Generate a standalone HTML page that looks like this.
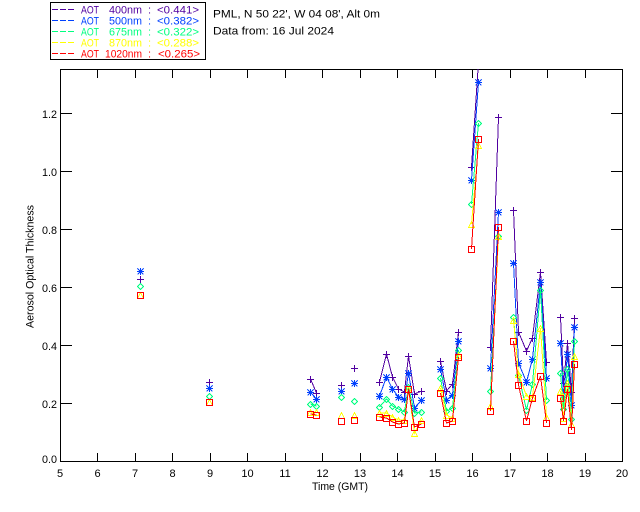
<!DOCTYPE html>
<html><head><meta charset="utf-8"><title>AOT</title>
<style>
html,body{margin:0;padding:0;background:#fff}
svg{display:block}
svg *{shape-rendering:crispEdges}
text{font-family:"Liberation Sans",sans-serif;font-size:11px;fill:#000;shape-rendering:auto}
polyline{fill:none;stroke-width:1}
.a{stroke:#5000a0;marker:url(#ma)}
.b{stroke:#0040ff;marker:url(#mb)}
.c{stroke:#00ff80;marker:url(#mc)}
.d{stroke:#ffff00;marker:url(#md)}
.e{stroke:#ff0000;marker:url(#me)}
</style></head><body>
<svg width="640" height="512" viewBox="0 0 640 512" xmlns="http://www.w3.org/2000/svg">
<defs>
<clipPath id="clip"><rect x="60" y="69" width="563" height="393"/></clipPath>
<marker id="ma" markerUnits="userSpaceOnUse" markerWidth="12" markerHeight="12" refX="6" refY="5.500" overflow="visible"><path d="M2.500 6H9.500M6 2.500V9.500" stroke="#5000a0" fill="none"/></marker>
<marker id="mb" markerUnits="userSpaceOnUse" markerWidth="12" markerHeight="12" refX="6" refY="5.500" overflow="visible"><path d="M2.500 6H9.500M6 2.500V9.500M3 3L9 9M9 3L3 9" stroke="#0040ff" fill="none"/><rect x="4.500" y="4.500" width="3" height="3" fill="#0040ff"/></marker>
<marker id="mc" markerUnits="userSpaceOnUse" markerWidth="12" markerHeight="12" refX="6" refY="5.500" overflow="visible"><path d="M6 3L9 6L6 9L3 6Z" stroke="#00ff80" fill="none"/></marker>
<marker id="md" markerUnits="userSpaceOnUse" markerWidth="12" markerHeight="12" refX="6" refY="5.500" overflow="visible"><path d="M6 3L9 9H3Z" stroke="#ffff00" fill="none"/></marker>
<marker id="me" markerUnits="userSpaceOnUse" markerWidth="12" markerHeight="12" refX="6" refY="5.500" overflow="visible"><path d="M3 3H9V9H3Z" stroke="#ff0000" fill="none"/></marker>
</defs>

<!-- legend -->
<rect x="50.500" y="2.500" width="155" height="57" fill="none" stroke="#000"/>
<g stroke-dasharray="6 2" stroke-width="1" fill="none">
<path d="M52 9.500H75" stroke="#5000a0"/>
<path d="M52 20.500H75" stroke="#0040ff"/>
<path d="M52 31.500H75" stroke="#00ff80"/>
<path d="M52 42.500H75" stroke="#ffff00"/>
<path d="M52 53.500H75" stroke="#ff0000"/>
</g>
<g><text x="81" y="13.500" textLength="18" lengthAdjust="spacingAndGlyphs" style="fill:#5000a0">AOT</text><text x="109" y="13.500" textLength="33" lengthAdjust="spacingAndGlyphs" style="fill:#5000a0">400nm</text><text x="148" y="13.500" style="fill:#5000a0">:</text><text x="157" y="13.500" textLength="42" lengthAdjust="spacingAndGlyphs" style="fill:#5000a0">&lt;0.441&gt;</text></g>
<g><text x="81" y="24.500" textLength="18" lengthAdjust="spacingAndGlyphs" style="fill:#0040ff">AOT</text><text x="109" y="24.500" textLength="33" lengthAdjust="spacingAndGlyphs" style="fill:#0040ff">500nm</text><text x="148" y="24.500" style="fill:#0040ff">:</text><text x="157" y="24.500" textLength="42" lengthAdjust="spacingAndGlyphs" style="fill:#0040ff">&lt;0.382&gt;</text></g>
<g><text x="81" y="35.500" textLength="18" lengthAdjust="spacingAndGlyphs" style="fill:#00ff80">AOT</text><text x="109" y="35.500" textLength="33" lengthAdjust="spacingAndGlyphs" style="fill:#00ff80">675nm</text><text x="148" y="35.500" style="fill:#00ff80">:</text><text x="157" y="35.500" textLength="42" lengthAdjust="spacingAndGlyphs" style="fill:#00ff80">&lt;0.322&gt;</text></g>
<g><text x="81" y="46.500" textLength="18" lengthAdjust="spacingAndGlyphs" style="fill:#ffff00">AOT</text><text x="109" y="46.500" textLength="33" lengthAdjust="spacingAndGlyphs" style="fill:#ffff00">870nm</text><text x="148" y="46.500" style="fill:#ffff00">:</text><text x="157" y="46.500" textLength="42" lengthAdjust="spacingAndGlyphs" style="fill:#ffff00">&lt;0.288&gt;</text></g>
<g><text x="81" y="57.500" textLength="18" lengthAdjust="spacingAndGlyphs" style="fill:#ff0000">AOT</text><text x="105" y="57.500" textLength="37" lengthAdjust="spacingAndGlyphs" style="fill:#ff0000">1020nm</text><text x="148" y="57.500" style="fill:#ff0000">:</text><text x="158" y="57.500" textLength="42" lengthAdjust="spacingAndGlyphs" style="fill:#ff0000">&lt;0.265&gt;</text></g>

<text x="213" y="17.500" textLength="167" lengthAdjust="spacingAndGlyphs">PML, N 50 22', W 04 08', Alt 0m</text>
<text x="213" y="34.500" textLength="121" lengthAdjust="spacingAndGlyphs">Data from: 16 Jul 2024</text>

<!-- axes -->
<path d="M60.500 69.500H622.500V461.500H60.500Z" fill="none" stroke="#000"/>
<path stroke="#000" fill="none" d="M97.500 69V78M135.500 69V78M172.500 69V78M210.500 69V78M247.500 69V78M285.500 69V78M322.500 69V78M360.500 69V78M397.500 69V78M435.500 69V78M472.500 69V78M510.500 69V78M547.500 69V78M585.500 69V78
M97.500 453V461M135.500 453V461M172.500 453V461M210.500 453V461M247.500 453V461M285.500 453V461M322.500 453V461M360.500 453V461M397.500 453V461M435.500 453V461M472.500 453V461M510.500 453V461M547.500 453V461M585.500 453V461
M60 113.500H72M60 171.500H72M60 229.500H72M60 287.500H72M60 345.500H72M60 403.500H72
M611 113.500H622M611 171.500H622M611 229.500H622M611 287.500H622M611 345.500H622M611 403.500H622"/>

<g>
<text x="42" y="118" textLength="15" lengthAdjust="spacingAndGlyphs">1.2</text>
<text x="42" y="176" textLength="15" lengthAdjust="spacingAndGlyphs">1.0</text>
<text x="42" y="234" textLength="15" lengthAdjust="spacingAndGlyphs">0.8</text>
<text x="42" y="292" textLength="15" lengthAdjust="spacingAndGlyphs">0.6</text>
<text x="42" y="350" textLength="15" lengthAdjust="spacingAndGlyphs">0.4</text>
<text x="42" y="408" textLength="15" lengthAdjust="spacingAndGlyphs">0.2</text>
<text x="42" y="463" textLength="15" lengthAdjust="spacingAndGlyphs">0.0</text>
</g>
<g text-anchor="middle">
<text x="60" y="477">5</text><text x="97.500" y="477">6</text><text x="135" y="477">7</text><text x="172.500" y="477">8</text><text x="210" y="477">9</text>
<text x="247.500" y="477">10</text><text x="285" y="477">11</text><text x="322.500" y="477">12</text><text x="360" y="477">13</text><text x="397.500" y="477">14</text>
<text x="435" y="477">15</text><text x="472.500" y="477">16</text><text x="510" y="477">17</text><text x="547.500" y="477">18</text><text x="585" y="477">19</text><text x="622" y="477">20</text>
</g>
<text x="312" y="490" textLength="56" lengthAdjust="spacingAndGlyphs">Time (GMT)</text>
<text transform="translate(33.500 328) rotate(-90)" textLength="123" lengthAdjust="spacingAndGlyphs">Aerosol Optical Thickness</text>

<!-- data -->
<g clip-path="url(#clip)">
<g>
<polyline class="a" points="140.500,279 140.500,279"/>
<polyline class="a" points="209.500,382 209.500,382"/>
<polyline class="a" points="310.500,379 316.500,393"/>
<polyline class="a" points="341.500,385 341.500,385"/>
<polyline class="a" points="354.500,368 354.500,368"/>
<polyline class="a" points="379.500,382 386.500,354 392.500,377 398.500,389 404.500,392 408.500,356 414.500,394 421.500,391"/>
<polyline class="a" points="440.500,361 446.500,391 452.500,384 458.500,332"/>
<polyline class="a" points="471.500,167 478.500,62"/>
<polyline class="a" points="490.500,347 498.500,117"/>
<polyline class="a" points="513.500,210 518.500,332 526.500,351 532.500,338 540.500,272 546.500,362"/>
<polyline class="a" points="560.500,317 563.500,383 567.500,343 571.500,392 574.500,318"/>
</g>
<g>
<polyline class="b" points="140.500,271 140.500,271"/>
<polyline class="b" points="209.500,388 209.500,388"/>
<polyline class="b" points="310.500,392 316.500,399"/>
<polyline class="b" points="341.500,391 341.500,391"/>
<polyline class="b" points="354.500,383 354.500,383"/>
<polyline class="b" points="379.500,396 386.500,377 392.500,389 398.500,397 404.500,399 408.500,373 414.500,408 421.500,400"/>
<polyline class="b" points="440.500,369 446.500,400 452.500,395 458.500,341"/>
<polyline class="b" points="471.500,180 478.500,82"/>
<polyline class="b" points="490.500,368 498.500,212"/>
<polyline class="b" points="513.500,263 518.500,363 526.500,382 532.500,359 540.500,282 546.500,378"/>
<polyline class="b" points="560.500,343 563.500,397 567.500,354 571.500,405 574.500,327"/>
</g>
<g>
<polyline class="c" points="140.500,286 140.500,286"/>
<polyline class="c" points="209.500,396 209.500,396"/>
<polyline class="c" points="310.500,404 316.500,406"/>
<polyline class="c" points="341.500,397 341.500,397"/>
<polyline class="c" points="354.500,401 354.500,401"/>
<polyline class="c" points="379.500,407 386.500,399 392.500,406 398.500,409 404.500,412 408.500,387 414.500,413 421.500,412"/>
<polyline class="c" points="440.500,378 446.500,411 452.500,408 458.500,350"/>
<polyline class="c" points="471.500,204 478.500,123"/>
<polyline class="c" points="490.500,391 498.500,236"/>
<polyline class="c" points="513.500,317 518.500,375 526.500,410 532.500,384 540.500,290 546.500,400"/>
<polyline class="c" points="560.500,373 563.500,409 567.500,369 571.500,419 574.500,341"/>
</g>
<g>
<polyline class="d" points="140.500,295 140.500,295"/>
<polyline class="d" points="209.500,402 209.500,402"/>
<polyline class="d" points="310.500,412 316.500,412"/>
<polyline class="d" points="341.500,415 341.500,415"/>
<polyline class="d" points="354.500,415 354.500,415"/>
<polyline class="d" points="379.500,413 386.500,413 392.500,417 398.500,420 404.500,420 408.500,389 414.500,433 421.500,420"/>
<polyline class="d" points="440.500,388 446.500,415 452.500,418 458.500,355"/>
<polyline class="d" points="471.500,224 478.500,145"/>
<polyline class="d" points="490.500,406 498.500,236"/>
<polyline class="d" points="513.500,320 518.500,374 526.500,396 532.500,397 540.500,328 546.500,417"/>
<polyline class="d" points="560.500,391 563.500,418 567.500,383 571.500,424 574.500,356"/>
</g>
<g>
<polyline class="e" points="140.500,295 140.500,295"/>
<polyline class="e" points="209.500,402 209.500,402"/>
<polyline class="e" points="310.500,414 316.500,415"/>
<polyline class="e" points="341.500,421 341.500,421"/>
<polyline class="e" points="354.500,420 354.500,420"/>
<polyline class="e" points="379.500,417 386.500,418 392.500,422 398.500,424 404.500,423 408.500,389 414.500,427 421.500,424"/>
<polyline class="e" points="440.500,393 446.500,423 452.500,421 458.500,357"/>
<polyline class="e" points="471.500,249 478.500,139"/>
<polyline class="e" points="490.500,411 498.500,227"/>
<polyline class="e" points="513.500,341 518.500,385 526.500,421 532.500,398 540.500,376 546.500,423"/>
<polyline class="e" points="560.500,398 563.500,421 567.500,389 571.500,430 574.500,364"/>
</g>
</g>
</svg>
</body></html>
